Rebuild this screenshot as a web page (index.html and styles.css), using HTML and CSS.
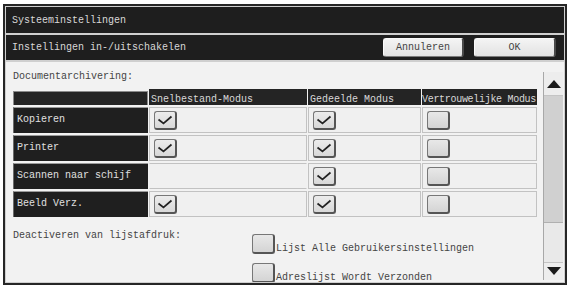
FILE: index.html
```html
<!DOCTYPE html>
<html lang="nl">

<head>
    <meta charset="UTF-8">
    <title>Systeeminstellingen</title>
    <link rel="stylesheet" href="styles.css">
</head>

<body>
    <div class="frame">
        <div class="bar title-bar">Systeeminstellingen</div>
        <div class="bar sub-bar">
            <span class="sub-title">Instellingen in-/uitschakelen</span>
            <div class="bar-buttons">
                <button class="btn">Annuleren</button>
                <button class="btn btn-ok">OK</button>
            </div>
        </div>
        <div class="content">
            <div class="main">
                <div class="section-label">Documentarchivering:</div>
                <div class="grid">
                    <div class="head head-blank"></div>
                    <div class="head">Snelbestand-Modus</div>
                    <div class="head">Gedeelde Modus</div>
                    <div class="head head-narrow">Vertrouwelijke Modus</div>

                    <div class="row-label">Kopieren</div>
                    <div class="cell"><span class="chk checked"></span></div>
                    <div class="cell"><span class="chk checked"></span></div>
                    <div class="cell"><span class="chk"></span></div>

                    <div class="row-label">Printer</div>
                    <div class="cell"><span class="chk checked"></span></div>
                    <div class="cell"><span class="chk checked"></span></div>
                    <div class="cell"><span class="chk"></span></div>

                    <div class="row-label">Scannen naar schijf</div>
                    <div class="cell cell-empty"></div>
                    <div class="cell"><span class="chk checked"></span></div>
                    <div class="cell"><span class="chk"></span></div>

                    <div class="row-label">Beeld Verz.</div>
                    <div class="cell"><span class="chk checked"></span></div>
                    <div class="cell"><span class="chk checked"></span></div>
                    <div class="cell"><span class="chk"></span></div>
                </div>

                <div class="print-block">
                    <div class="print-label">Deactiveren van lijstafdruk:</div>
                    <div class="options">
                        <div class="option"><span class="chk"></span><span>Lijst Alle Gebruikersinstellingen</span></div>
                        <div class="option"><span class="chk"></span><span>Adreslijst Wordt Verzonden</span></div>
                    </div>
                </div>
            </div>

            <div class="scrollbar">
                <div class="scroll-btn">
                    <svg width="14" height="8" viewBox="0 0 14 8"><path d="M0 8 L7 0 L14 8 Z" fill="#1a1a1a"/></svg>
                </div>
                <div class="scroll-thumb"></div>
                <div class="scroll-track"></div>
                <div class="scroll-btn scroll-btn-down">
                    <svg width="14" height="8" viewBox="0 0 14 8"><path d="M0 0 L14 0 L7 8 Z" fill="#1a1a1a"/></svg>
                </div>
            </div>
        </div>
    </div>
</body>

</html>
```

FILE: styles.css
```css
body {
    margin: 0;
    background-color: #fff;
    font-family: "Liberation Mono", "Courier New", monospace;
    font-size: 10px;
    color: #444;
}

.frame {
    margin: 4px 0 0 3px;
    width: 564px;
    box-sizing: border-box;
    border: 2px solid #262626;
    padding: 1px;
    background-color: #cfcfcf;
    display: flex;
    flex-direction: column;
    gap: 2px;
}

.bar {
    background-color: #1e1e1e;
    color: #d8d8d8;
    display: flex;
    align-items: center;
    padding-left: 6px;
}

.title-bar {
    height: 26px;
}

.sub-bar {
    height: 25px;
    justify-content: space-between;
    padding-right: 8px;
}

.bar-buttons {
    display: flex;
    gap: 10px;
}

.btn {
    width: 81px;
    height: 19px;
    padding: 0;
    font-family: inherit;
    font-size: 10px;
    color: #444;
    background: linear-gradient(#f4f4f4, #e2e2e2);
    border: none;
    border-left: 1px solid #fafafa;
    border-top: 1px solid #fafafa;
    border-right: 2px solid #4a4a4a;
    border-bottom: 1px solid #7a7a7a;
    border-radius: 3px;
}

.btn-ok {
    width: 82px;
}

.content {
    height: 220px;
    background-color: #f2f2f2;
    display: flex;
    overflow: hidden;
}

.main {
    flex: 1;
    padding: 9px 0 0 7px;
}

.section-label {
    line-height: 12px;
}

.grid {
    margin-top: 6px;
    width: 524px;
    display: grid;
    grid-template-columns: 135px 158px 113px 115px;
    grid-template-rows: 16px repeat(4, 26px);
    column-gap: 1px;
    row-gap: 2px;
}

.head {
    background-color: #242424;
    color: #d8d8d8;
    display: flex;
    align-items: flex-end;
    padding-left: 2px;
    line-height: 11px;
}

.head-blank {
    margin-top: 2px;
    border: 1px solid #8a8a8a;
    border-bottom: none;
}

.head-narrow {
    letter-spacing: -0.3px;
    padding-left: 0;
    align-items: center;
    padding-top: 4px;
}

.row-label {
    background-color: #1f1f1f;
    color: #e0e0e0;
    border-top: 1px solid #9a9a9a;
    border-left: 1px solid #6a6a6a;
    display: flex;
    align-items: center;
    padding-left: 3px;
    padding-bottom: 2px;
}

.cell {
    background-color: #f0f0f0;
    border: 1px solid #c2c2c2;
    display: flex;
    align-items: center;
    padding-left: 4px;
    padding-top: 1px;
}

.cell-empty {
    border-left-color: #f0f0f0;
    border-right-color: #f0f0f0;
}

.chk {
    width: 23px;
    height: 19px;
    box-sizing: border-box;
    flex-shrink: 0;
    background: linear-gradient(#e8e8e8, #d4d4d4);
    border: 1px solid #777;
    border-right: 2px solid #555;
    border-bottom: 2px solid #555;
    border-radius: 3px;
}

.checked {
    background-image:
        url("data:image/svg+xml;utf8,<svg xmlns='http://www.w3.org/2000/svg' width='20' height='16'><path d='M3.5 7.5 L8.5 11.5 L16.5 4.5' fill='none' stroke='%23222' stroke-width='1.7'/></svg>"),
        linear-gradient(#ececec, #d8d8d8);
    background-repeat: no-repeat;
}

.print-block {
    margin-top: 13px;
    display: flex;
}

.print-label {
    width: 239px;
    line-height: 12px;
}

.options {
    margin-top: 4px;
    display: flex;
    flex-direction: column;
    gap: 9px;
}

.option {
    display: flex;
    align-items: flex-end;
    gap: 1px;
    line-height: 11px;
    white-space: nowrap;
}

.option .chk {
    height: 20px;
}

.scrollbar {
    width: 19px;
    margin: 10px 1px 2px 0;
    border-left: 1px solid #a8a8a8;
    display: flex;
    flex-direction: column;
    background-color: #e9e9e9;
}

.scroll-btn {
    height: 24px;
    display: flex;
    align-items: center;
    justify-content: center;
    background-color: #ededed;
    border-bottom: 1px solid #c4c4c4;
    box-sizing: border-box;
}

.scroll-btn-down {
    height: 18px;
    border-bottom: none;
    border-top: 1px solid #c4c4c4;
    align-items: flex-start;
    padding-top: 4px;
}

.scroll-thumb {
    height: 126px;
    background-color: #d0d0d0;
    border-bottom: 1px solid #b0b0b0;
}

.scroll-track {
    flex: 1;
}
```
